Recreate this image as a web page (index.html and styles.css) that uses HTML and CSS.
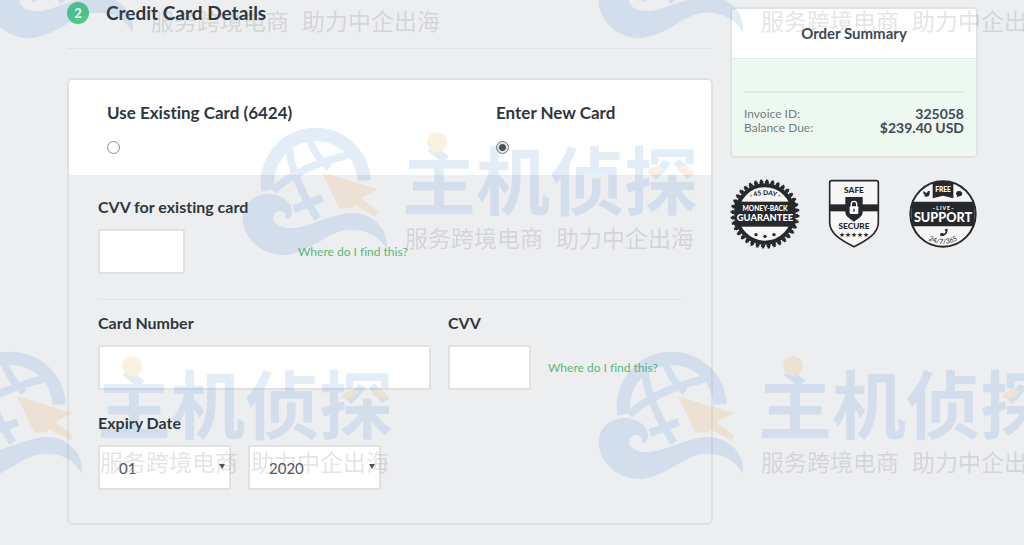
FILE: index.html
```html
<!DOCTYPE html>
<html lang="en">
<head>
<meta charset="utf-8">
<meta name="viewport" content="width=device-width, initial-scale=1">
<title>Credit Card Details</title>
<link rel="stylesheet" href="styles.css">
</head>
<body>
<div class="page">
  <main class="main">
    <header class="step">
      <span class="step-number">2</span>
      <h1 class="step-title">Credit Card Details</h1>
    </header>
    <form class="card">
      <div class="choices">
        <div class="choice">
          <label for="use-existing">Use Existing Card (6424)</label>
          <input class="radio" type="radio" name="card" id="use-existing">
        </div>
        <div class="choice">
          <label for="use-new">Enter New Card</label>
          <input class="radio" type="radio" name="card" id="use-new" checked>
        </div>
      </div>
      <div class="fields">
        <div class="existing">
          <label class="label" for="old-cvv">CVV for existing card</label>
          <input class="box old-cvv" type="text" id="old-cvv">
          <a class="help" href="#">Where do I find this?</a>
        </div>
        <div class="new-card">
          <label class="label" for="number">Card Number</label>
          <label class="label" for="cvv">CVV</label>
          <span></span>
          <input class="box" type="text" id="number">
          <input class="box" type="text" id="cvv">
          <a class="help" href="#">Where do I find this?</a>
        </div>
        <div class="expiry">
          <label class="label" for="month">Expiry Date</label>
          <div class="selects">
            <span class="select-wrap"><select class="box select" id="month"><option>01</option></select></span>
            <span class="select-wrap"><select class="box select" aria-label="Expiry year"><option>2020</option></select></span>
          </div>
        </div>
      </div>
    </form>
  </main>

  <aside class="side">
    <section class="summary">
      <h2 class="summary-title">Order Summary</h2>
      <div class="summary-body">
        <dl class="totals">
          <dt>Invoice ID:</dt><dd>325058</dd>
          <dt>Balance Due:</dt><dd>$239.40 USD</dd>
        </dl>
      </div>
    </section>
    <div class="badges">
      <svg class="badge" width="70" height="70" viewBox="0 0 210 210" role="img" aria-label="45 day money-back guarantee">
        <circle cx="105" cy="105" r="95" fill="none" stroke="#25292c" stroke-width="8" pathLength="360" stroke-dasharray="7 3"/>
        <circle cx="105" cy="105" r="100" fill="none" stroke="#25292c" stroke-width="7" pathLength="360" stroke-dasharray="4 6" stroke-dashoffset="-1.5"/>
        <circle cx="105" cy="105" r="86" fill="#f7f7f8" stroke="#25292c" stroke-width="12"/>
        <path id="arc45" d="M55 60Q105 36 155 60" fill="none"/>
        <text class="b" font-size="20" text-anchor="middle"><textPath href="#arc45" startOffset="50%">· 45 DAY ·</textPath></text>
        <rect x="14" y="68" width="182" height="75" fill="#25292c"/>
        <text class="b w" x="105" y="95" font-size="20" text-anchor="middle">MONEY-BACK</text>
        <text class="b w" x="105" y="127" font-size="28" text-anchor="middle">GUARANTEE</text>
        <circle cx="78" cy="167" r="5"/><circle cx="105" cy="172" r="5"/><circle cx="132" cy="167" r="5"/>
      </svg>
      <svg class="badge" width="52" height="70" viewBox="0 0 156 210" role="img" aria-label="Safe secure">
        <path d="M11 5H145Q151 5 151 11V131C151 163 116 184 78 203C40 184 5 163 5 131V11Q5 5 11 5Z" fill="#f7f7f8" stroke="#25292c" stroke-width="5"/>
        <rect x="5" y="76" width="146" height="21" fill="#25292c"/>
        <path d="M52 54H104V99C104 113 91 118 78 128C65 118 52 113 52 99Z" fill="#25292c"/>
        <rect x="65" y="82" width="26" height="23" rx="3" fill="#fff"/>
        <path d="M70 83V75Q70 67 78 67T86 75V83" fill="none" stroke="#fff" stroke-width="4"/>
        <path d="M78 89V98" stroke="#25292c" stroke-width="4"/>
        <text class="b" x="78" y="42" font-size="25" text-anchor="middle">SAFE</text>
        <text class="b" x="78" y="150" font-size="25" text-anchor="middle">SECURE</text>
        <text class="b" x="78" y="174" font-size="20" text-anchor="middle">★★★★★</text>
      </svg>
      <svg class="badge" width="70" height="70" viewBox="0 0 210 210" role="img" aria-label="Free live support 24/7/365">
        <circle cx="105" cy="105" r="98" fill="#f7f7f8" stroke="#25292c" stroke-width="6"/>
        <path d="M74 11Q105 2 136 11V58L105 50L74 58Z" fill="#25292c"/>
        <text class="b w" x="105" y="38" font-size="20" text-anchor="middle">FREE</text>
        <path d="M46 36L56 43L60 36L66 37L64 49Q58 56 47 51L52 48L46 44Z"/>
        <path d="M144 43Q146 35 154 36Q163 37 163 45Q161 52 154 52L146 55L148 50Q144 48 144 43Z"/>
        <path d="M14 68H196Q204 105 196 142H14Q6 105 14 68Z" fill="#25292c"/>
        <text class="b w" x="105" y="92" font-size="15" text-anchor="middle">– L I V E –</text>
        <text class="b w" x="105" y="128" font-size="38" text-anchor="middle">SUPPORT</text>
        <path d="M110 151L119 149Q120 171 98 172L96 164L103 161L107 164Q112 162 113 158Z"/>
        <path id="arc24" d="M50 176Q105 214 160 176" fill="none"/>
        <text class="m" font-size="21" text-anchor="middle"><textPath href="#arc24" startOffset="50%">24/7/365</textPath></text>
      </svg>
    </div>
  </aside>
</div>

<svg class="watermark" aria-hidden="true">
  <defs>
    <g id="mark">
      <g transform="scale(.33333) translate(-36 -24)" fill="none" stroke="#3e87d0" stroke-width="23">
        <path d="M114 211A145 145 0 1 1 402 181" stroke-width="40"/>
        <path d="M176 70Q180 130 206 190T263 296"/>
        <path d="M236 50Q252 105 297 145" stroke-width="22"/>
        <path d="M130 212Q205 140 355 105"/>
        <path d="M192 267L278 234" stroke-width="24"/>
        <path d="M38 295C38 250 75 222 115 222C155 222 187 248 186 275C185 290 178 300 166 296C172 280 158 270 145 274C128 279 126 298 136 308C150 325 185 328 215 320C270 305 320 280 365 279C430 280 470 325 471 375L470 390C450 345 400 325 350 330C290 335 250 395 165 405C90 408 38 350 38 295Z" fill="#3e87d0" stroke="none"/>
        <path d="M276 157L444 208L392 233L444 275L436 289L372 255L368 264L328 266Z" fill="#f29b37" stroke="none"/>
      </g>
      <text class="wordmark" x="160" y="81">主机侦探</text>
      <circle cx="195" cy="14" r="10" fill="#f29b37"/>
      <path d="M404 45Q414 33 422 41Q412 50 404 45ZM434 41Q442 33 452 45Q444 50 434 41Z" fill="#f29b37"/>
      <text class="slogan" x="163" y="119">服务跨境电商</text>
      <text class="slogan" x="314" y="119">助力中企出海</text>
    </g>
  </defs>
  <g opacity=".15">
    <use href="#mark" x="-12" y="-89"/>
    <use href="#mark" x="598" y="-89"/>
    <use href="#mark" x="242" y="128"/>
    <use href="#mark" x="-63" y="352"/>
    <use href="#mark" x="598" y="352"/>
  </g>
</svg>
</body>
</html>
```
FILE: styles.css
```css
* { box-sizing: border-box; }

body {
  margin: 0;
  min-height: 100vh;
  position: relative;
  overflow-x: hidden;
  background: #edeef0;
  color: #2e373e;
  font-family: Lato, "Liberation Sans", "Noto Sans CJK SC", sans-serif;
  font-size: 16px;
  font-variant-ligatures: none;
  line-height: 20px;
}

.page {
  display: grid;
  grid-template-columns: minmax(0, 1fr) 248px;
  gap: 17px;
  padding: 0 46px 20px 67px;
}

.step {
  display: flex;
  align-items: center;
  gap: 17px;
  padding: 2px 0 24px;
  border-bottom: 1px solid #e1e3e5;
}

.step-number {
  width: 22px;
  height: 22px;
  border-radius: 50%;
  background: #50c982;
  color: #fff;
  font-size: 13px;
  font-weight: 900;
  line-height: 22px;
  text-align: center;
}

.step-title {
  margin: 0;
  font-size: 19px;
  font-weight: 700;
  line-height: 20px;
}

.card {
  margin-top: 29px;
  border: 2px solid #dee0e2;
  border-radius: 6px;
  overflow: hidden;
}

.choices {
  display: grid;
  grid-template-columns: 389px minmax(0, 1fr);
  padding: 23px 0 21px 38px;
  background: #fff;
}

.choice {
  display: flex;
  flex-direction: column;
  align-items: flex-start;
  gap: 18px;
  font-size: 17px;
  font-weight: 700;
}

.radio {
  appearance: none;
  width: 13px;
  height: 13px;
  margin: 0;
  border: 1px solid #888d91;
  border-radius: 50%;
  background: #fff;
}

.radio:checked {
  border-color: #777c80;
  background: radial-gradient(circle, #4b5157 3px, #e4e5e6 4px);
}

.fields { padding: 22px 29px 33px; }

.label {
  font-size: 16px;
  font-weight: 700;
}

.box {
  width: 100%;
  height: 45px;
  padding: 0 12px;
  border: 2px solid #dfe1e3;
  border-radius: 2px;
  background: #fff;
  color: #4f565d;
  font: inherit;
}

.help {
  color: #5bb878;
  font-size: 12px;
  text-decoration: none;
}

.existing {
  display: grid;
  grid-template-columns: 183px auto;
  align-items: center;
  gap: 12px 17px;
  padding-bottom: 25px;
  border-bottom: 1px solid #e1e3e5;
}

.existing .label { grid-column: 1 / -1; }

.old-cvv { width: 87px; }

.new-card {
  display: grid;
  grid-template-columns: minmax(0, 1fr) 83px 134px;
  align-items: center;
  gap: 12px 17px;
  padding: 13px 0 23px;
}

.selects {
  display: flex;
  gap: 17px;
  margin-top: 12px;
}

.select-wrap {
  position: relative;
  width: 133px;
}

.select-wrap::after {
  content: "";
  position: absolute;
  top: 19px;
  right: 6px;
  border: 3px solid transparent;
  border-top: 5px solid #4f565d;
  pointer-events: none;
}

.select {
  display: block;
  appearance: none;
  padding-left: 19px;
  font-size: 15px;
}

.side { padding-top: 7px; }

.summary {
  border: 2px solid #dfe3e3;
  border-radius: 5px;
  overflow: hidden;
  background: #edf8f1;
}

.summary-title {
  margin: 0;
  padding: 14px 0 15px;
  border-bottom: 1px solid #e3ebe6;
  background: #fff;
  color: #414950;
  font-size: 15px;
  font-weight: 700;
  line-height: 20px;
  text-align: center;
}

.summary-body { padding: 32px 12px 21px; }

.totals {
  display: grid;
  grid-template-columns: auto auto;
  justify-content: space-between;
  margin: 0;
  padding-top: 14px;
  border-top: 2px solid #e1ebe6;
  line-height: 14px;
}

.totals dt {
  color: #747c7e;
  font-size: 12px;
}

.totals dd {
  margin: 0;
  color: #414950;
  font-size: 14px;
  font-weight: 700;
  text-align: right;
}

.badges {
  display: flex;
  justify-content: space-between;
  margin-top: 21px;
}

.badge {
  display: block;
  fill: #25292c;
}

.b,
.m {
  font-family: Lato, "DejaVu Sans", sans-serif;
  font-weight: 900;
}

.m { font-weight: 400; }

.w { fill: #fff; }

.watermark {
  position: absolute;
  inset: 0;
  width: 100%;
  height: 100%;
  pointer-events: none;
}

.wordmark {
  fill: #3e87d0;
  font-family: "Noto Sans CJK SC", sans-serif;
  font-size: 74px;
  font-weight: 700;
}

.slogan {
  fill: #4b4b4b;
  font-family: "Noto Sans CJK SC", sans-serif;
  font-size: 23px;
}
```
